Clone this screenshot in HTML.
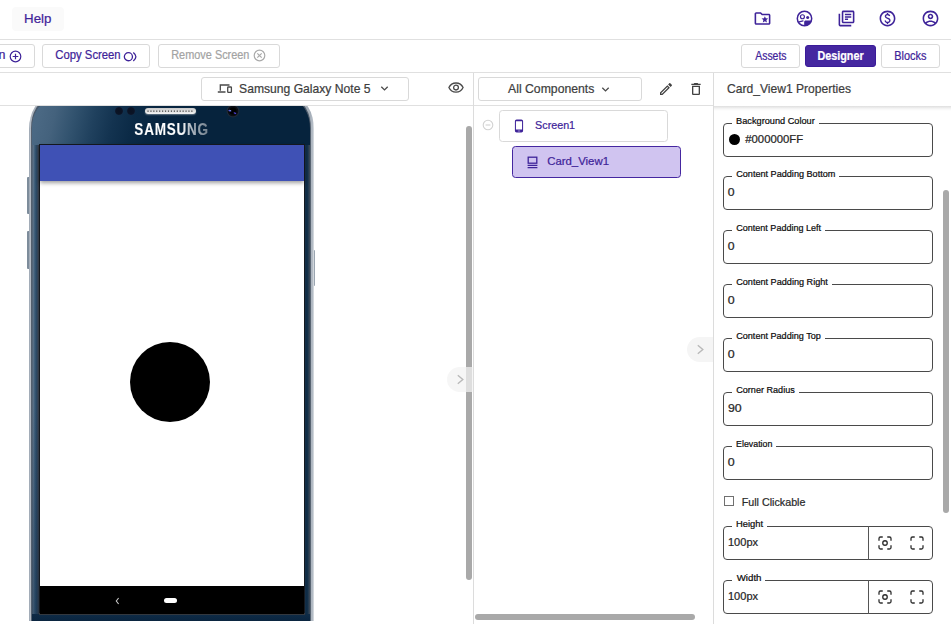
<!DOCTYPE html>
<html lang="en">
<head>
<meta charset="utf-8">
<title>Designer</title>
<style>
*{box-sizing:border-box;margin:0;padding:0}
html,body{width:951px;height:624px;overflow:hidden;background:#fff}
body{font-family:"Liberation Sans",sans-serif;position:relative}
.abs{position:absolute}
.t{position:absolute;left:0;top:0;white-space:nowrap;line-height:1;transform-origin:0 0;-webkit-text-stroke:.22px currentColor}
.hline{position:absolute;height:1px;background:#e0e0e0}
.vline{position:absolute;width:1px;background:#dcdcdc}
.btn{position:absolute;border:1px solid #d9d9d9;border-radius:3px;background:#fff}
.field{position:absolute;border:1px solid #4a4a4a;border-radius:4px;background:#fff}
.notch{position:absolute;height:3px;background:#fff}
.sb{position:absolute;background:#a9a9a9;border-radius:3px}
</style>
</head>
<body>

<!-- ===== top header ===== -->
<div class="abs" style="left:12px;top:7px;width:52px;height:24px;background:#fafafa;border-radius:4px"></div>
<div class="hline" style="left:0;top:39px;width:951px"></div>

<!-- header icons (19px, centres 762/804/846/888/930 , y 18) -->
<svg class="abs" style="left:752.5px;top:8.6px" width="19" height="19" viewBox="0 0 24 24" fill="#3e2399"><path d="M20 6h-8l-2-2H4c-1.100 0-2 .900-2 2v12c0 1.100.900 2 2 2h16c1.100 0 2-.900 2-2V8c0-1.100-.900-2-2-2zm0 12H4V6h5.170l2 2H20v10zm-6.920-3.960L12.390 17 15 15.470 17.610 17l-.690-2.960 2.300-1.990-3.030-.260L15 9l-1.190 2.790-3.030.260z"/></svg>
<svg class="abs" style="left:794.6px;top:8.8px" width="19" height="19" viewBox="0 0 24 24"><defs><clipPath id="cc"><circle cx="12" cy="12" r="9.2"/></clipPath></defs><circle cx="12" cy="12" r="9.1" fill="none" stroke="#3e2399" stroke-width="1.9"/><circle cx="9.400" cy="9.800" r="2.500" fill="none" stroke="#3e2399" stroke-width="1.500"/><circle cx="16" cy="10.600" r="1.900" fill="#3e2399"/><path d="M5.300 16.200l4.800-1.300" stroke="#3e2399" stroke-width="1.600" fill="none" stroke-linecap="round"/><path clip-path="url(#cc)" d="M11.600 22v-5.600c0-1.100.900-1.800 2-1.800h8.400V22z" fill="#3e2399"/></svg>
<svg class="abs" style="left:836.5px;top:8.5px" width="19" height="19" viewBox="0 0 24 24" fill="#3e2399"><path d="M4 6H2v14c0 1.100.900 2 2 2h14v-2H4V6zm16-4H8c-1.100 0-2 .900-2 2v12c0 1.100.900 2 2 2h12c1.100 0 2-.900 2-2V4c0-1.100-.900-2-2-2zm0 14H8V4h12v12zM10 9h8v2h-8zm0 3h4v2h-4zm0-6h8v2h-8z"/></svg>
<svg class="abs" style="left:878.4px;top:8.7px" width="19" height="19" viewBox="0 0 24 24" fill="#3e2399"><path d="M12 2C6.480 2 2 6.480 2 12s4.480 10 10 10 10-4.480 10-10S17.520 2 12 2zm0 18c-4.410 0-8-3.590-8-8s3.590-8 8-8 8 3.590 8 8-3.590 8-8 8zm.890-8.900c-1.780-.590-2.640-.960-2.640-1.900 0-1.020 1.110-1.390 1.810-1.390 1.310 0 1.790.990 1.900 1.340l1.580-.670c-.150-.440-.820-1.910-2.660-2.230V5h-1.750v1.260c-2.600.560-2.620 2.850-2.620 2.960 0 2.270 2.250 2.910 3.350 3.310 1.580.560 2.280 1.070 2.280 2.030 0 1.130-1.050 1.610-1.980 1.610-1.820 0-2.340-1.870-2.400-2.090l-1.660.670c.630 2.190 2.280 2.780 3.020 2.960V19h1.750v-1.240c.520-.090 3.020-.590 3.020-3.220.010-1.390-.600-2.610-3-3.440z"/></svg>
<svg class="abs" style="left:920.5px;top:8.7px" width="19" height="19" viewBox="0 0 24 24" fill="#3e2399"><path d="M12 2C6.480 2 2 6.480 2 12s4.480 10 10 10 10-4.480 10-10S17.520 2 12 2zM7.070 18.280c.430-.900 3.050-1.780 4.930-1.780s4.510.880 4.930 1.780C15.570 19.360 13.860 20 12 20s-3.570-.640-4.930-1.720zm11.290-1.450c-1.430-1.740-4.900-2.330-6.360-2.330s-4.930.590-6.360 2.330C4.620 15.490 4 13.820 4 12c0-4.410 3.590-8 8-8s8 3.590 8 8c0 1.820-.620 3.490-1.640 4.830zM12 6c-1.940 0-3.500 1.560-3.500 3.500S10.060 13 12 13s3.500-1.560 3.500-3.500S13.940 6 12 6zm0 5c-.830 0-1.500-.670-1.500-1.500S11.170 8 12 8s1.500.670 1.500 1.500S12.830 11 12 11z"/></svg>

<!-- ===== toolbar ===== -->
<div class="btn" style="left:-20px;top:44px;width:55px;height:24px"></div>
<svg class="abs" style="left:8.5px;top:49.500px" width="13" height="13" viewBox="0 0 13 13" fill="none" stroke="#3e2399" stroke-width="1.200"><circle cx="6.500" cy="6.500" r="5.300"/><path d="M6.500 3.700v5.600M3.700 6.500h5.600"/></svg>
<div class="btn" style="left:42px;top:44px;width:107.500px;height:24px"></div>
<svg class="abs" style="left:123px;top:49.500px" width="15" height="13" viewBox="0 0 15 13" fill="none" stroke="#3e2399" stroke-width="1.300"><circle cx="5.400" cy="6.700" r="4.050"/><path d="M10.300 2.500Q15.500 6.700 10.300 10.900"/></svg>
<div class="btn" style="left:158px;top:44px;width:122px;height:24px"></div>
<svg class="abs" style="left:252.900px;top:49px" width="13" height="13" viewBox="0 0 13 13" fill="none" stroke="#aaaaaa" stroke-width="1.200"><circle cx="6.500" cy="6.500" r="5.300"/><path d="M4.300 4.300l4.400 4.400M8.700 4.300l-4.400 4.400"/></svg>

<div class="btn" style="left:741px;top:44px;width:59px;height:24px"></div>
<div class="btn" style="left:805px;top:45px;width:71px;height:22px;background:#4527a0;border-color:#3a1b99"></div>
<div class="btn" style="left:881px;top:44px;width:59px;height:24px"></div>
<div class="hline" style="left:0;top:72px;width:951px"></div>

<!-- ===== viewer header row ===== -->
<div class="btn" style="left:201px;top:77px;width:207.500px;height:23.500px"></div>
<svg class="abs" style="left:217px;top:83px" width="16" height="11" viewBox="0 0 16 11" fill="none" stroke="#4a4a4a" stroke-width="1.300"><path d="M3.300 7.800V2h9.200M0.800 9h7.700"/><rect x="10.700" y="4" width="3.700" height="5.400" rx=".6"/></svg>
<svg class="abs" style="left:380px;top:85px" width="9" height="7" viewBox="0 0 9 7" fill="none" stroke="#4a4a4a" stroke-width="1.300"><path d="M1.300 1.700l3.200 3.200 3.200-3.200"/></svg>
<svg class="abs" style="left:448px;top:82px" width="16" height="11" viewBox="0 0 16 11" fill="none" stroke="#4a4a4a" stroke-width="1.300"><path d="M.9 5.600C2.300 2.600 4.900 1 8 1s5.700 1.600 7.100 4.600C13.700 8.600 11.100 10.200 8 10.200S2.300 8.600.9 5.600z"/><circle cx="8" cy="5.600" r="2.400"/></svg>
<div class="hline" style="left:0;top:105px;width:474px"></div>

<!-- ===== phone ===== -->
<div class="abs" style="left:0;top:106px;width:473px;height:518px;overflow:hidden">
  <!-- side buttons -->
  <div class="abs" style="left:27px;top:70.500px;width:3px;height:37.500px;background:#7d8c9b;border-radius:1px"></div>
  <div class="abs" style="left:27px;top:125px;width:3px;height:37.500px;background:#7d8c9b;border-radius:1px"></div>
  <div class="abs" style="left:312.500px;top:143.500px;width:2.200px;height:36px;background:#9aa5b0;border-radius:1px"></div>
  <!-- outer rim -->
  <div class="abs" style="left:28.800px;top:-8.400px;width:285.500px;height:523.100px;border-radius:20px 20px 0 0 / 31px 31px 0 0;background:linear-gradient(90deg,#d4d9de 0,#8e9aa8 .700px,#c3c9d1 1.800px,#aab2bc 2.600px,#aeb6c0 50%,#a6afb9 calc(100% - 3.400px),#b0b8c2 calc(100% - 2.300px),#b4bcc5 calc(100% - 1.200px),#e6e9ec 100%)"></div>
  <div class="abs" style="left:31.100px;top:-5.700px;width:280.300px;height:520.400px;border-radius:17.300px 17.300px 0 0 / 28.300px 28.300px 0 0;background:linear-gradient(90deg,#596472 0,#4b5969 1.200px,#4b5969 calc(100% - 1.200px),#616b77 100%)"></div>
  <!-- body with side gradients -->
  <div class="abs" style="left:32.300px;top:-4.500px;width:278.100px;height:519.200px;border-radius:16px 16px 0 0 / 27px 27px 0 0;background:linear-gradient(90deg,#4c5d6f 0,#5d7389 1.200px,#3d5d79 2.700px,#2b4b67 4.200px,#2d4259 5.200px,#3e4857 6.200px,#24282e 7px,#15191f 8px,#15191f calc(100% - 6.200px),#14222e calc(100% - 5.400px),#14304a calc(100% - 4.400px),#0d2a44 calc(100% - 2.900px),#223a50 calc(100% - 1.700px),#2e3c4c calc(100% - .800px),#465260 100%)"></div>
  <!-- top bezel -->
  <div class="abs" style="left:32.300px;top:-4.500px;width:278.100px;height:43.500px;border-radius:16px 16px 0 0 / 27px 27px 0 0;background:linear-gradient(103deg,#4c6a85 0,#4a6883 3.600%,#44627d 8.800%,#31526e 15.800%,#20415e 22.700%,#133350 29.700%,#0b2a46 36.600%,#082641 43.500%,#06233d 58%,#06233d 100%)"></div>
  <!-- bottom bezel -->
  <div class="abs" style="left:32.300px;top:508px;width:278.100px;height:6.700px;background:linear-gradient(180deg,#0f2c47 0,#0a2540 100%)"></div>
  <div class="abs" style="left:32.300px;top:300px;width:7px;height:214.700px;background:linear-gradient(180deg,rgba(12,38,66,0),rgba(12,38,66,.38))"></div>
  <!-- sensors, speaker, camera -->
  <div class="abs" style="left:114.900px;top:.900px;width:8px;height:8px;border-radius:50%;background:radial-gradient(circle,#0a1222 0,#0b1426 58%,#152640 80%,#12304c 100%)"></div>
  <div class="abs" style="left:127.100px;top:.900px;width:8px;height:8px;border-radius:50%;background:radial-gradient(circle,#0a1222 0,#0b1426 58%,#152640 80%,#12304c 100%)"></div>
  <div class="abs" style="left:144.800px;top:1.600px;width:51.600px;height:6.400px;border-radius:3.200px;background:linear-gradient(180deg,#c9c9c9 0,#dedede 45%,#f4f4f4 100%);box-shadow:0 1px 1.500px rgba(170,180,190,.55)"></div>
  <svg class="abs" style="left:147px;top:3.500px" width="47" height="2.200" viewBox="0 0 47 2.200" fill="#1c1c1c"><circle cx="0.90" cy="1.100" r=".720"/><circle cx="3.84" cy="1.100" r=".720"/><circle cx="6.78" cy="1.100" r=".720"/><circle cx="9.72" cy="1.100" r=".720"/><circle cx="12.66" cy="1.100" r=".720"/><circle cx="15.60" cy="1.100" r=".720"/><circle cx="18.54" cy="1.100" r=".720"/><circle cx="21.48" cy="1.100" r=".720"/><circle cx="24.42" cy="1.100" r=".720"/><circle cx="27.36" cy="1.100" r=".720"/><circle cx="30.30" cy="1.100" r=".720"/><circle cx="33.24" cy="1.100" r=".720"/><circle cx="36.18" cy="1.100" r=".720"/><circle cx="39.12" cy="1.100" r=".720"/><circle cx="42.06" cy="1.100" r=".720"/><circle cx="45.00" cy="1.100" r=".720"/></svg>
  <svg class="abs" style="left:226.300px;top:-2px" width="14" height="14" viewBox="0 0 14 14"><circle cx="7" cy="7" r="6.500" fill="#1f2a38"/><circle cx="7" cy="7" r="5.300" fill="#0a0d14"/><circle cx="7" cy="7" r="3.600" fill="#000"/><ellipse cx="3.900" cy="6.700" rx="1.500" ry=".800" fill="#5560e8" transform="rotate(14 3.900 6.700)"/><ellipse cx="4.600" cy="6.600" rx=".600" ry=".400" fill="#aab4ff"/><ellipse cx="8.900" cy="9.200" rx="1.400" ry=".700" fill="#4a3fd0" transform="rotate(25 8.900 9.200)"/></svg>
  <!-- screen -->
  <div class="abs" style="left:39.300px;top:38.300px;width:265.500px;height:470.300px;background:linear-gradient(180deg,#15191f 0,#15191f 468.800px,#33383f 469.200px)"></div>
  <div class="abs" style="left:40px;top:39px;width:264px;height:441px;background:#fff"></div>
  <div class="abs" style="left:40px;top:39px;width:264px;height:36px;background:#3f51b5;box-shadow:0 1.500px 4px rgba(0,0,0,.38)"></div>
  <div class="abs" style="left:130px;top:236px;width:80px;height:80px;border-radius:50%;background:#000"></div>
  <div class="abs" style="left:40px;top:480px;width:264px;height:28.200px;background:#000"></div>
  <svg class="abs" style="left:114.500px;top:490.500px" width="5" height="8" viewBox="0 0 5 8" fill="none" stroke="#c8c8c8" stroke-width="1.100"><path d="M3.600 1L1.300 4l2.300 3"/></svg>
  <div class="abs" style="left:164.300px;top:491.800px;width:12.700px;height:5.600px;border-radius:2.800px;background:#fff"></div>
</div>

<!-- viewer scrollbar + toggle -->
<div class="sb" style="left:466px;top:126px;width:6px;height:453.500px"></div>
<div class="abs" style="left:447px;top:367px;width:26px;height:25px;border-radius:12.500px 0 0 12.500px;background:rgba(243,243,243,.72)"></div>
<svg class="abs" style="left:456px;top:374px" width="9" height="11" viewBox="0 0 9 11" fill="none" stroke="#b9b9b9" stroke-width="1.400"><path d="M1.800 1.300l5 4.200-5 4.200"/></svg>
<div class="vline" style="left:473px;top:73px;height:551px"></div>

<!-- ===== components panel ===== -->
<div class="btn" style="left:478px;top:77px;width:164px;height:23.500px"></div>
<svg class="abs" style="left:601px;top:85.500px" width="9" height="7" viewBox="0 0 9 7" fill="none" stroke="#4a4a4a" stroke-width="1.300"><path d="M1.300 1.700l3.200 3.200 3.200-3.200"/></svg>
<svg class="abs" style="left:657.700px;top:81px" width="16" height="16" viewBox="0 0 24 24" fill="#424242"><path d="M14.060 9.020l.920.920L5.920 19H5v-.920l9.060-9.060M17.660 3c-.250 0-.510.100-.700.290l-1.830 1.830 3.750 3.750 1.830-1.830c.390-.390.390-1.020 0-1.410l-2.340-2.340c-.200-.200-.450-.290-.710-.290zm-3.600 3.190L3 17.250V21h3.750L17.810 9.940l-3.750-3.750z"/></svg>
<svg class="abs" style="left:687.800px;top:81px" width="16" height="16" viewBox="0 0 24 24" fill="#424242"><path d="M6 19c0 1.100.900 2 2 2h8c1.100 0 2-.900 2-2V7H6v12zM8 9h8v10H8V9zm7.500-5l-1-1h-5l-1 1H5v2h14V4h-3.500z"/></svg>
<div class="hline" style="left:474px;top:105px;width:240px"></div>

<svg class="abs" style="left:481.900px;top:118.900px" width="12" height="12" viewBox="0 0 12 12" fill="none" stroke="#d2d2d2" stroke-width="1.100"><circle cx="6" cy="6" r="4.800"/><path d="M3.600 6h4.800"/></svg>
<div class="btn" style="left:499px;top:110px;width:169px;height:32px;border-radius:3.500px"></div>
<svg class="abs" style="left:512px;top:119px" width="14" height="14" viewBox="0 0 24 24" fill="#3e2399"><path d="M16 1H8C6.340 1 5 2.340 5 4v16c0 1.660 1.340 3 3 3h8c1.660 0 3-1.340 3-3V4c0-1.660-1.340-3-3-3zm-2 20h-4v-1h4v1zm3.250-3H6.750V4h10.500v14z"/></svg>
<div class="btn" style="left:512px;top:146px;width:169px;height:32px;border-radius:3.500px;background:#d0c4f0;border-color:#4527a0"></div>
<svg class="abs" style="left:526.500px;top:155.500px" width="11" height="13" viewBox="0 0 11 13" fill="none" stroke="#3e2399"><rect x="1.200" y="1.200" width="8.600" height="6" stroke-width="1.300"/><path d="M.6 9.400h9.800M.6 11.600h9.800" stroke-width="1.200"/></svg>

<!-- components scrollbars + toggle -->
<div class="sb" style="left:475.200px;top:614px;width:220px;height:6px"></div>
<div class="abs" style="left:687px;top:337px;width:26px;height:25px;border-radius:12.500px 0 0 12.500px;background:#f5f5f5"></div>
<svg class="abs" style="left:696px;top:344px" width="9" height="11" viewBox="0 0 9 11" fill="none" stroke="#b9b9b9" stroke-width="1.400"><path d="M1.800 1.300l5 4.200-5 4.200"/></svg>
<div class="vline" style="left:713px;top:73px;height:551px"></div>

<!-- ===== properties panel ===== -->
<div class="abs" style="left:714px;top:106px;width:237px;height:5px;background:linear-gradient(180deg,rgba(0,0,0,.13),rgba(0,0,0,.03) 60%,rgba(0,0,0,0))"></div>
<div class="field" style="left:723px;top:123.30px;width:210px;height:33.7px"></div>
<div class="notch" style="left:732px;top:122.30px;width:86.7px"></div>
<div class="field" style="left:723px;top:176.30px;width:210px;height:33.7px"></div>
<div class="notch" style="left:732px;top:175.30px;width:107.0px"></div>
<div class="field" style="left:723px;top:230.30px;width:210px;height:33.7px"></div>
<div class="notch" style="left:732px;top:229.30px;width:93.3px"></div>
<div class="field" style="left:723px;top:284.20px;width:210px;height:33.7px"></div>
<div class="notch" style="left:732px;top:283.20px;width:99.8px"></div>
<div class="field" style="left:723px;top:338.20px;width:210px;height:33.7px"></div>
<div class="notch" style="left:732px;top:337.20px;width:92.6px"></div>
<div class="field" style="left:723px;top:392.20px;width:210px;height:33.7px"></div>
<div class="notch" style="left:732px;top:391.20px;width:66.6px"></div>
<div class="field" style="left:723px;top:446.00px;width:210px;height:33.7px"></div>
<div class="notch" style="left:732px;top:445.00px;width:44.2px"></div>
<div class="field" style="left:723px;top:526.30px;width:210px;height:33.7px"></div>
<div class="notch" style="left:732px;top:525.30px;width:35.3px"></div>
<div class="abs" style="left:868px;top:526.30px;width:1px;height:33.7px;background:#555"></div>
<svg class="abs" style="left:876.0px;top:534.3px" width="18" height="18" viewBox="0 0 24 24" fill="none" stroke="#2e2e2e" stroke-width="1.750"><path d="M4 9V6a2 2 0 0 1 2-2h3M15 4h3a2 2 0 0 1 2 2v3M20 15v3a2 2 0 0 1-2 2h-3M9 20H6a2 2 0 0 1-2-2v-3"/><circle cx="12" cy="12" r="3"/></svg>
<svg class="abs" style="left:907.6px;top:534.3px" width="18" height="18" viewBox="0 0 24 24" fill="none" stroke="#2e2e2e" stroke-width="1.750"><path d="M4 9V6a2 2 0 0 1 2-2h3M15 4h3a2 2 0 0 1 2 2v3M20 15v3a2 2 0 0 1-2 2h-3M9 20H6a2 2 0 0 1-2-2v-3"/></svg>
<div class="field" style="left:723px;top:580.40px;width:210px;height:33.7px"></div>
<div class="notch" style="left:732px;top:579.40px;width:33.0px"></div>
<div class="abs" style="left:868px;top:580.40px;width:1px;height:33.7px;background:#555"></div>
<svg class="abs" style="left:876.0px;top:588.4px" width="18" height="18" viewBox="0 0 24 24" fill="none" stroke="#2e2e2e" stroke-width="1.750"><path d="M4 9V6a2 2 0 0 1 2-2h3M15 4h3a2 2 0 0 1 2 2v3M20 15v3a2 2 0 0 1-2 2h-3M9 20H6a2 2 0 0 1-2-2v-3"/><circle cx="12" cy="12" r="3"/></svg>
<svg class="abs" style="left:907.6px;top:588.4px" width="18" height="18" viewBox="0 0 24 24" fill="none" stroke="#2e2e2e" stroke-width="1.750"><path d="M4 9V6a2 2 0 0 1 2-2h3M15 4h3a2 2 0 0 1 2 2v3M20 15v3a2 2 0 0 1-2 2h-3M9 20H6a2 2 0 0 1-2-2v-3"/></svg>
<div class="abs" style="left:729.200px;top:133.800px;width:11px;height:11px;border-radius:50%;background:#000"></div>
<div class="abs" style="left:724px;top:496px;width:10px;height:10px;border:1px solid #707070;background:#fff"></div>
<div class="sb" style="left:943px;top:190px;width:6px;height:323px"></div>

<!-- ===== all text ===== -->
<div class="t" id="help" style="font-size:13.5px;color:#3e2399;font-weight:400;transform:translate(24.03px,12.23px) scaleX(0.9842)">Help</div>
<div class="t" id="tn" style="font-size:12px;color:#3e2399;font-weight:400;transform:translate(-1.50px,48.84px) scaleX(1.0392)">n</div>
<div class="t" id="copy" style="font-size:12px;color:#3e2399;font-weight:400;transform:translate(55.35px,48.99px) scaleX(0.9411)">Copy Screen</div>
<div class="t" id="remove" style="font-size:12px;color:#a3a3a3;font-weight:400;transform:translate(171.25px,49.01px) scaleX(0.9086)">Remove Screen</div>
<div class="t" id="assets" style="font-size:12px;color:#3e2399;font-weight:400;transform:translate(755.17px,50.20px) scaleX(0.8717)">Assets</div>
<div class="t" id="designer" style="font-size:12px;color:#ffffff;font-weight:700;transform:translate(817.39px,49.65px) scaleX(0.9008)">Designer</div>
<div class="t" id="blocks" style="font-size:12px;color:#3e2399;font-weight:400;transform:translate(894.29px,49.88px) scaleX(0.9113)">Blocks</div>
<div class="t" id="device" style="font-size:12.6px;color:#3d3d3d;font-weight:400;transform:translate(239.06px,82.76px) scaleX(0.9629)">Samsung Galaxy Note 5</div>
<div class="t" id="allc" style="font-size:12.6px;color:#3d3d3d;font-weight:400;transform:translate(508.05px,83.33px) scaleX(0.9710)">All Components</div>
<div class="t" id="ptitle" style="font-size:12.6px;color:#3d3d3d;font-weight:400;transform:translate(727.06px,83.42px) scaleX(0.9591)">Card_View1 Properties</div>
<div class="t" id="screen1" style="font-size:11.6px;color:#3e2399;font-weight:400;transform:translate(535.11px,119.16px) scaleX(0.9259)">Screen1</div>
<div class="t" id="card1" style="font-size:11.6px;color:#3e2399;font-weight:400;transform:translate(547.17px,154.73px) scaleX(0.9826)">Card_View1</div>
<div class="t" id="fullc" style="font-size:10.8px;color:#2a2a2a;font-weight:400;transform:translate(741.63px,497.27px) scaleX(0.9941)">Full Clickable</div>
<div class="t" id="samsung" style="font-size:16px;color:transparent;font-weight:700;transform:translate(134.36px,121.51px) scaleX(0.8451);letter-spacing:.9px;background:linear-gradient(90deg,#fff 0,#fdfdfd 64%,#c3c9d0 72%,#9aa5b0 84%,#74818e 100%);-webkit-background-clip:text;background-clip:text">SAMSUNG</div>
<div class="t" id="l0" style="font-size:9.2px;color:#0c0c0c;font-weight:400;transform:translate(736.09px,117.25px) scaleX(1.0001)">Background Colour</div>
<div class="t" id="v0" style="font-size:10.6px;color:#262626;font-weight:400;transform:translate(745.30px,133.98px) scaleX(1.0669)">#000000FF</div>
<div class="t" id="l1" style="font-size:9.2px;color:#0c0c0c;font-weight:400;transform:translate(736.19px,170.19px) scaleX(0.9909)">Content Padding Bottom</div>
<div class="t" id="v1" style="font-size:10.6px;color:#262626;font-weight:400;transform:translate(727.84px,186.83px) scaleX(1.1529)">0</div>
<div class="t" id="l2" style="font-size:9.2px;color:#0c0c0c;font-weight:400;transform:translate(736.27px,224.25px) scaleX(0.9819)">Content Padding Left</div>
<div class="t" id="v2" style="font-size:10.6px;color:#262626;font-weight:400;transform:translate(727.84px,240.83px) scaleX(1.1529)">0</div>
<div class="t" id="l3" style="font-size:9.2px;color:#0c0c0c;font-weight:400;transform:translate(736.19px,277.94px) scaleX(0.9913)">Content Padding Right</div>
<div class="t" id="v3" style="font-size:10.6px;color:#262626;font-weight:400;transform:translate(727.76px,294.53px) scaleX(1.1712)">0</div>
<div class="t" id="l4" style="font-size:9.2px;color:#0c0c0c;font-weight:400;transform:translate(736.21px,331.87px) scaleX(0.9876)">Content Padding Top</div>
<div class="t" id="v4" style="font-size:10.6px;color:#262626;font-weight:400;transform:translate(727.76px,348.53px) scaleX(1.1712)">0</div>
<div class="t" id="l5" style="font-size:9.2px;color:#0c0c0c;font-weight:400;transform:translate(736.23px,385.88px) scaleX(0.9884)">Corner Radius</div>
<div class="t" id="v5" style="font-size:10.6px;color:#262626;font-weight:400;transform:translate(727.89px,402.89px) scaleX(1.1648)">90</div>
<div class="t" id="l6" style="font-size:9.2px;color:#0c0c0c;font-weight:400;transform:translate(736.10px,439.86px) scaleX(0.9590)">Elevation</div>
<div class="t" id="v6" style="font-size:10.6px;color:#262626;font-weight:400;transform:translate(727.80px,456.76px) scaleX(1.1736)">0</div>
<div class="t" id="l7" style="font-size:9.2px;color:#0c0c0c;font-weight:400;transform:translate(735.99px,520.21px) scaleX(1.0191)">Height</div>
<div class="t" id="v7" style="font-size:10.6px;color:#262626;font-weight:400;transform:translate(727.97px,537.01px) scaleX(1.0422)">100px</div>
<div class="t" id="l8" style="font-size:9.2px;color:#0c0c0c;font-weight:400;transform:translate(736.73px,574.46px) scaleX(1.0534)">Width</div>
<div class="t" id="v8" style="font-size:10.6px;color:#262626;font-weight:400;transform:translate(727.97px,590.95px) scaleX(1.0422)">100px</div>

</body>
</html>
